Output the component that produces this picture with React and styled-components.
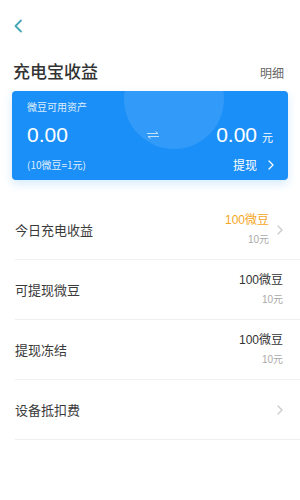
import React from "react";
import styled, { createGlobalStyle } from "styled-components";

const GlobalStyle = createGlobalStyle`
  body {
    margin: 0;
    background: #fff;
    font-family: "Noto Sans CJK SC", "Noto Sans", sans-serif;
  }
`;

const Page = styled.div`
  width: 300px;
  height: 500px;
  background: #fff;
  overflow: hidden;
`;

const NavBar = styled.div`
  height: 52px;
  display: flex;
  align-items: center;
  padding-left: 13px;
`;

const BackButton = styled.button`
  background: none;
  border: none;
  padding: 0;
  display: flex;
  cursor: pointer;
`;

const TitleRow = styled.div`
  display: flex;
  justify-content: space-between;
  align-items: center;
  padding: 0 16px 0 13px;
  height: 36px;
`;

const Title = styled.h1`
  margin: 0;
  font-size: 17px;
  font-weight: 500;
  color: #333;
`;

const DetailLink = styled.span`
  font-size: 12px;
  color: #666;
  margin-top: 4px;
`;

const Card = styled.div`
  position: relative;
  margin: 3px 12px 0;
  height: 89px;
  border-radius: 4px;
  background: #1b8ff8;
  box-shadow: 0 4px 10px rgba(27, 143, 248, 0.18);
  overflow: hidden;
  padding: 9px 15px 0;
  box-sizing: border-box;
  color: #fff;
`;

const Glow = styled.div`
  position: absolute;
  left: 112px;
  top: -42px;
  width: 100px;
  height: 100px;
  border-radius: 50%;
  background: rgba(255, 255, 255, 0.1);
`;

const CardLabel = styled.div`
  position: relative;
  font-size: 10px;
  line-height: 14px;
  opacity: 0.85;
`;

const AmountRow = styled.div`
  position: relative;
  display: flex;
  justify-content: space-between;
  align-items: center;
  margin-top: 8px;
  height: 26px;
`;

const Amount = styled.span`
  font-family: "Liberation Sans", Arial, sans-serif;
  font-size: 21px;
`;

const Unit = styled.span`
  font-size: 11px;
  margin-left: 5px;
`;

const Swap = styled.span`
  margin-left: 22px;
  display: flex;
  opacity: 0.7;
`;

const FootRow = styled.div`
  position: relative;
  display: flex;
  justify-content: space-between;
  align-items: center;
  margin-top: 8px;
`;

const Rate = styled.span`
  font-size: 10px;
  opacity: 0.85;
`;

const Withdraw = styled.span`
  display: flex;
  align-items: center;
  gap: 11px;
  font-size: 12px;
  margin-right: -1px;
`;

const List = styled.div`
  margin-top: 20px;
`;

const Row = styled.div`
  display: flex;
  align-items: center;
  justify-content: space-between;
  height: 59px;
  margin-left: 15px;
  padding-right: 17px;
  border-bottom: 1px solid #f0f0f0;
`;

const RowLabel = styled.span`
  font-size: 13px;
  color: #3a3a3a;
`;

const RowRight = styled.div`
  display: flex;
  align-items: center;
  gap: 8px;
`;

const Values = styled.div`
  display: flex;
  flex-direction: column;
  align-items: flex-end;
`;

const Beans = styled.span`
  font-family: "Liberation Sans", "Noto Sans CJK SC", sans-serif;
  font-size: 12px;
  line-height: 17px;
  color: ${({ $accent }) => ($accent ? "#f6a623" : "#333")};
`;

const Yuan = styled.span`
  font-family: "Liberation Sans", "Noto Sans CJK SC", sans-serif;
  font-size: 10px;
  line-height: 14px;
  margin-top: 4px;
  color: #aaa;
`;

const Chevron = ({ color = "#c8c8c8", size = 10 }) => (
  <svg width={size * 0.6} height={size} viewBox="0 0 6 10" fill="none">
    <path d="M1 1l4 4-4 4" stroke={color} strokeWidth="1.2" strokeLinecap="round" strokeLinejoin="round" />
  </svg>
);

const rows = [
  { label: "今日充电收益", beans: "100微豆", yuan: "10元", accent: true, arrow: true },
  { label: "可提现微豆", beans: "100微豆", yuan: "10元" },
  { label: "提现冻结", beans: "100微豆", yuan: "10元" },
  { label: "设备抵扣费", arrow: true },
];

export default function App() {
  return (
    <Page>
      <GlobalStyle />
      <NavBar>
        <BackButton>
          <svg width="10" height="14" viewBox="0 0 10 14" fill="none">
            <path d="M8 1.5L2.5 7 8 12.5" stroke="#45a7b6" strokeWidth="1.8" strokeLinecap="round" strokeLinejoin="round" />
          </svg>
        </BackButton>
      </NavBar>
      <TitleRow>
        <Title>充电宝收益</Title>
        <DetailLink>明细</DetailLink>
      </TitleRow>
      <Card>
        <Glow />
        <CardLabel>微豆可用资产</CardLabel>
        <AmountRow>
          <Amount>0.00</Amount>
          <Swap>
            <svg width="14" height="8" viewBox="0 0 14 8" fill="none">
              <path d="M1 2.5h11l-2.5-2M13 5.5H2l2.5 2" stroke="#fff" strokeWidth="1" />
            </svg>
          </Swap>
          <span>
            <Amount>0.00</Amount>
            <Unit>元</Unit>
          </span>
        </AmountRow>
        <FootRow>
          <Rate>(10微豆=1元)</Rate>
          <Withdraw>
            提现
            <Chevron color="#fff" size={10} />
          </Withdraw>
        </FootRow>
      </Card>
      <List>
        {rows.map((r) => (
          <Row key={r.label}>
            <RowLabel>{r.label}</RowLabel>
            <RowRight>
              {r.beans && (
                <Values>
                  <Beans $accent={r.accent}>{r.beans}</Beans>
                  <Yuan>{r.yuan}</Yuan>
                </Values>
              )}
              {r.arrow && <Chevron />}
            </RowRight>
          </Row>
        ))}
      </List>
    </Page>
  );
}
